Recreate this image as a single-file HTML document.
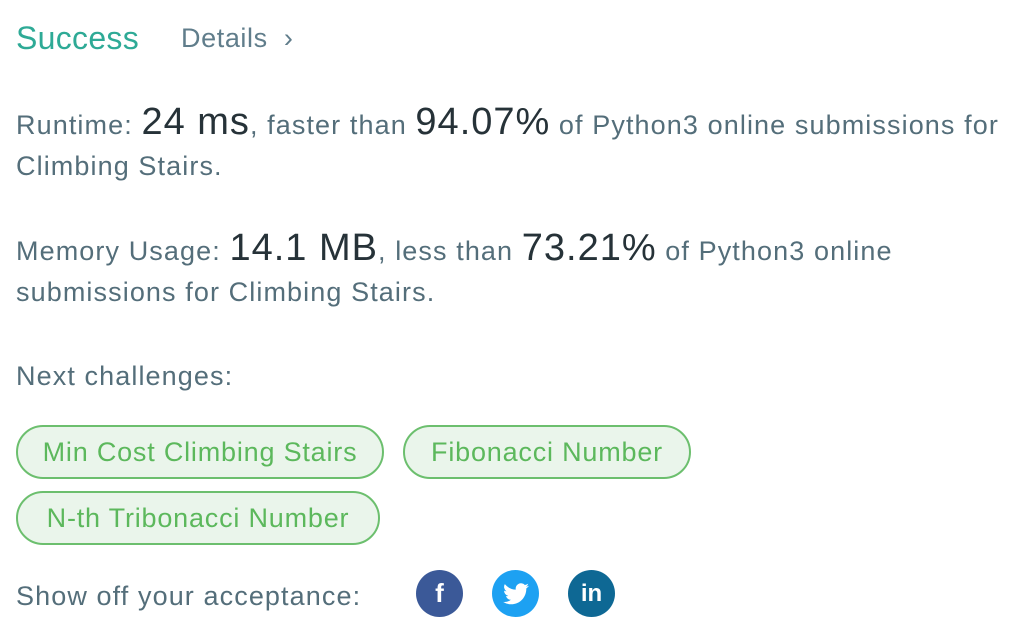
<!DOCTYPE html>
<html><head><meta charset="utf-8"><style>
body{margin:0;width:1030px;height:638px;background:#fff;font-family:"Liberation Sans",sans-serif;color:#546e7a;overflow:hidden;position:relative}
.a{position:absolute;white-space:nowrap}
.t{font-size:27px;letter-spacing:1.1px}
.big{font-size:38px;color:#263238;letter-spacing:1px}
.pill{position:absolute;height:50px;border:2px solid #6cbf6e;border-radius:27px;background:#eaf5eb;color:#5cb85c;font-size:27px;letter-spacing:0.8px;line-height:50px;text-align:center;box-sizing:content-box}
.ic{position:absolute;width:47px;height:47px;border-radius:50%;top:570px;color:#fff;font-weight:bold;text-align:center;line-height:47px;font-size:26px}
</style></head><body>
<div class="a" style="left:16px;top:20px;font-size:32px;color:#2eaa96;letter-spacing:0.3px">Success</div>
<div class="a" style="left:181px;top:23px;font-size:27px;color:#607d8b;letter-spacing:0.6px">Details &nbsp;›</div>
<div class="a t" style="left:16px;top:102px;line-height:41px">Runtime: <span class="big">24 ms</span>, faster than <span class="big">94.07%</span> of Python3 online submissions for<br>Climbing Stairs.</div>
<div class="a t" style="left:16px;top:228px;line-height:41px">Memory Usage: <span class="big">14.1 MB</span>, less than <span class="big">73.21%</span> of Python3 online<br>submissions for Climbing Stairs.</div>
<div class="a t" style="left:16px;top:361px">Next challenges:</div>
<div class="pill" style="left:16px;top:425px;width:364px">Min Cost Climbing Stairs</div>
<div class="pill" style="left:403px;top:425px;width:284px">Fibonacci Number</div>
<div class="pill" style="left:16px;top:491px;width:360px">N-th Tribonacci Number</div>
<div class="a t" style="left:16px;top:581px">Show off your acceptance:</div>
<div class="ic" style="left:416px;background:#3b5998">f</div>
<div class="ic" style="left:492px;background:#1da1f2"><svg width="26" height="22" viewBox="0 0 24 20" style="margin-top:13px"><path fill="#fff" d="M24 2.4a9.8 9.8 0 0 1-2.8.8A4.9 4.9 0 0 0 23.3.5a9.9 9.9 0 0 1-3.1 1.2A4.9 4.9 0 0 0 11.8 6 14 14 0 0 1 1.7.9a4.9 4.9 0 0 0 1.5 6.6 4.9 4.9 0 0 1-2.2-.6 4.9 4.9 0 0 0 3.9 4.9 4.9 4.9 0 0 1-2.2.1 4.9 4.9 0 0 0 4.6 3.4A9.9 9.9 0 0 1 0 17.3 14 14 0 0 0 7.5 19.5c9 0 14-7.5 14-14v-.6A10 10 0 0 0 24 2.4z"/></svg></div>
<div class="ic" style="left:568px;background:#0e6894;font-size:24px">in</div>
</body></html>
